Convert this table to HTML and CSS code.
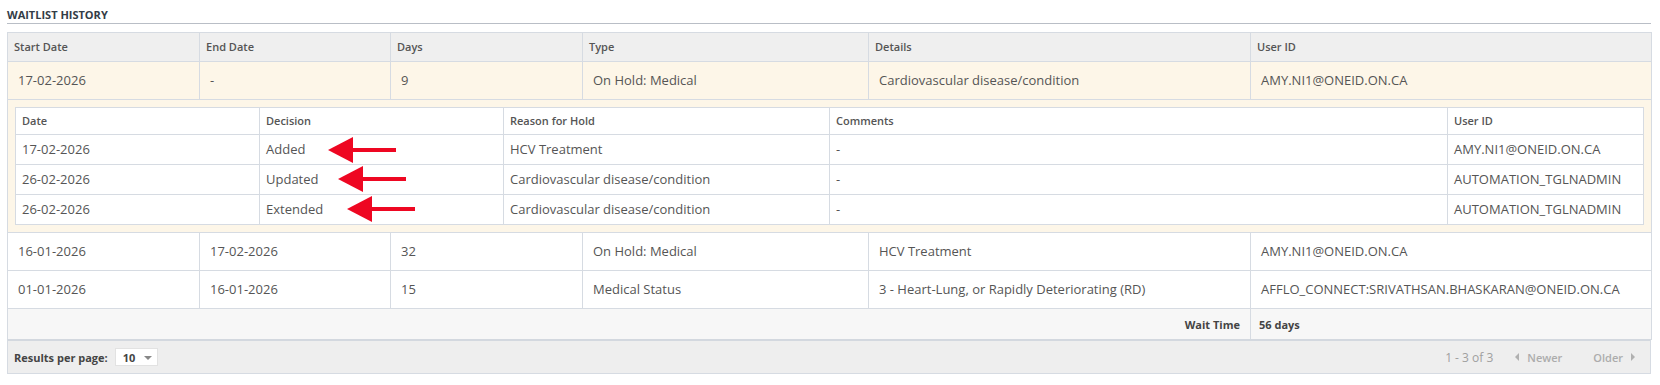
FILE: index.html
```html
<!DOCTYPE html>
<html>
<head>
<meta charset="utf-8">
<link rel="stylesheet" href="styles.css">
</head>
<body>
<div class="panel">
  <div class="title">WAITLIST HISTORY</div>
  <table class="grid">
    <colgroup>
      <col style="width:192px"><col style="width:191px"><col style="width:192px"><col style="width:286px"><col style="width:382px"><col style="width:401px">
    </colgroup>
    <thead>
      <tr><th>Start Date</th><th>End Date</th><th>Days</th><th>Type</th><th>Details</th><th>User ID</th></tr>
    </thead>
    <tbody>
      <tr class="active"><td>17-02-2026</td><td>-</td><td>9</td><td>On Hold: Medical</td><td>Cardiovascular disease/condition</td><td>AMY.NI1@ONEID.ON.CA</td></tr>
      <tr class="band">
        <td colspan="6">
          <table class="sub">
            <colgroup>
              <col style="width:244px"><col style="width:244px"><col style="width:326px"><col style="width:618px"><col style="width:196px">
            </colgroup>
            <thead>
              <tr><th>Date</th><th>Decision</th><th>Reason for Hold</th><th>Comments</th><th>User ID</th></tr>
            </thead>
            <tbody>
              <tr><td>17-02-2026</td><td class="mark">Added<svg class="arrow a1" width="68" height="26" viewBox="0 0 68 26"><polygon points="0,13 25,0 25,26" /><rect x="24" y="11" width="44" height="4" /></svg></td><td>HCV Treatment</td><td>-</td><td>AMY.NI1@ONEID.ON.CA</td></tr>
              <tr><td>26-02-2026</td><td class="mark">Updated<svg class="arrow a2" width="68" height="26" viewBox="0 0 68 26"><polygon points="0,13 25,0 25,26" /><rect x="24" y="11" width="44" height="4" /></svg></td><td>Cardiovascular disease/condition</td><td>-</td><td>AUTOMATION_TGLNADMIN</td></tr>
              <tr><td>26-02-2026</td><td class="mark">Extended<svg class="arrow a3" width="68" height="26" viewBox="0 0 68 26"><polygon points="0,13 25,0 25,26" /><rect x="24" y="11" width="44" height="4" /></svg></td><td>Cardiovascular disease/condition</td><td>-</td><td>AUTOMATION_TGLNADMIN</td></tr>
            </tbody>
          </table>
        </td>
      </tr>
      <tr><td>16-01-2026</td><td>17-02-2026</td><td>32</td><td>On Hold: Medical</td><td>HCV Treatment</td><td>AMY.NI1@ONEID.ON.CA</td></tr>
      <tr><td>01-01-2026</td><td>16-01-2026</td><td>15</td><td>Medical Status</td><td>3 - Heart-Lung, or Rapidly Deteriorating (RD)</td><td>AFFLO_CONNECT:SRIVATHSAN.BHASKARAN@ONEID.ON.CA</td></tr>
      <tr class="total"><td colspan="5" class="total-label">Wait Time</td><td class="total-value">56 days</td></tr>
    </tbody>
  </table>
  <div class="footer">
    <div class="perpage">
      <span class="perpage-label">Results per page:</span>
      <span class="select">10<span class="caret"></span></span>
    </div>
    <div class="pager">
      <span class="count">1 - 3 of 3</span>
      <span class="nav newer"><span class="tri-left"></span>Newer</span>
      <span class="nav older">Older<span class="tri-right"></span></span>
    </div>
  </div>
</div>
</body>
</html>
```

FILE: styles.css
```css
html, body {
  margin: 0;
  padding: 0;
  background: #ffffff;
}

body {
  font-family: "Open Sans", "Liberation Sans", sans-serif;
  color: #555555;
}

.panel {
  margin: 0 9px 0 7px;
  padding-top: 8px;
}

.title {
  font-size: 11px;
  font-weight: 700;
  color: #333c46;
  line-height: 14px;
  padding-bottom: 1px;
  border-bottom: 1px solid #b9bec6;
  margin-bottom: 8px;
}

.grid {
  width: 1644px;
  table-layout: fixed;
  border-collapse: collapse;
  border: 1px solid #d6dbe2;
}

.grid > thead > tr > th {
  background: #efefef;
  font-size: 11px;
  font-weight: 600;
  text-align: left;
  color: #555555;
  line-height: 16px;
  padding: 6px 6px;
  border: 1px solid #d6dbe2;
}

.grid > tbody > tr > td {
  font-size: 13px;
  line-height: 17px;
  padding: 10px 10px;
  border: 1px solid #d6dbe2;
  white-space: nowrap;
}

.grid > tbody > tr.active > td {
  background: #fdf6e8;
}

.grid > tbody > tr.band > td {
  background: #fdf6e8;
  padding: 7px 7px 7px 7px;
}

.sub {
  width: 1628px;
  table-layout: fixed;
  border-collapse: collapse;
  border: 1px solid #d6dbe2;
  background: #ffffff;
}

.sub th {
  font-size: 11px;
  font-weight: 600;
  text-align: left;
  color: #555555;
  line-height: 14px;
  padding: 6px 6px;
  border: 1px solid #d6dbe2;
}

.sub td {
  font-size: 13px;
  line-height: 17px;
  padding: 6px 6px;
  border: 1px solid #d6dbe2;
  white-space: nowrap;
}

.sub td.mark {
  position: relative;
}

.arrow {
  position: absolute;
  fill: #ee0722;
}

.arrow.a1 { left: 68px; top: 2px; }
.arrow.a2 { left: 78px; top: 1px; }
.arrow.a3 { left: 87px; top: 1px; }

.grid > tbody > tr.total > td {
  background: #f7f7f7;
  font-size: 11px;
  font-weight: 700;
  line-height: 17px;
  padding: 7px 10px 6px 10px;
  color: #444444;
}

.grid > tbody > tr.total > td.total-label {
  text-align: right;
}

.grid > tbody > tr.total > td.total-value {
  padding-left: 8px;
}

.footer {
  display: flex;
  justify-content: space-between;
  align-items: center;
  width: 1644px;
  box-sizing: border-box;
  height: 35px;
  background: #eeeeee;
  border: 1px solid #d6dbe2;
  border-top: 2px solid #d3d8df;
  margin-top: -1px;
  padding: 0 15px 0 6px;
}

.perpage {
  display: flex;
  align-items: center;
  gap: 7px;
}

.perpage-label {
  font-size: 11px;
  font-weight: 700;
  color: #444444;
}

.select {
  display: inline-flex;
  align-items: center;
  height: 18px;
  box-sizing: border-box;
  padding: 0 5px 0 7px;
  background: #ffffff;
  border: 1px solid #e2e2e2;
  font-size: 11px;
  font-weight: 700;
  color: #444444;
  gap: 9px;
}

.caret {
  width: 0;
  height: 0;
  border-left: 4px solid transparent;
  border-right: 4px solid transparent;
  border-top: 4px solid #888888;
  margin-top: 1px;
}

.pager {
  display: flex;
  align-items: center;
  font-size: 12px;
  color: #a0a0a0;
}

.nav {
  display: inline-flex;
  align-items: center;
  gap: 8px;
  font-size: 11px;
  font-weight: 600;
  color: #acacac;
}

.nav.newer {
  margin-left: 22px;
}

.nav.older {
  margin-left: 31px;
}

.tri-left {
  width: 0;
  height: 0;
  border-top: 4px solid transparent;
  border-bottom: 4px solid transparent;
  border-right: 4px solid #b0b0b0;
}

.tri-right {
  width: 0;
  height: 0;
  border-top: 4px solid transparent;
  border-bottom: 4px solid transparent;
  border-left: 4px solid #b0b0b0;
}
```
